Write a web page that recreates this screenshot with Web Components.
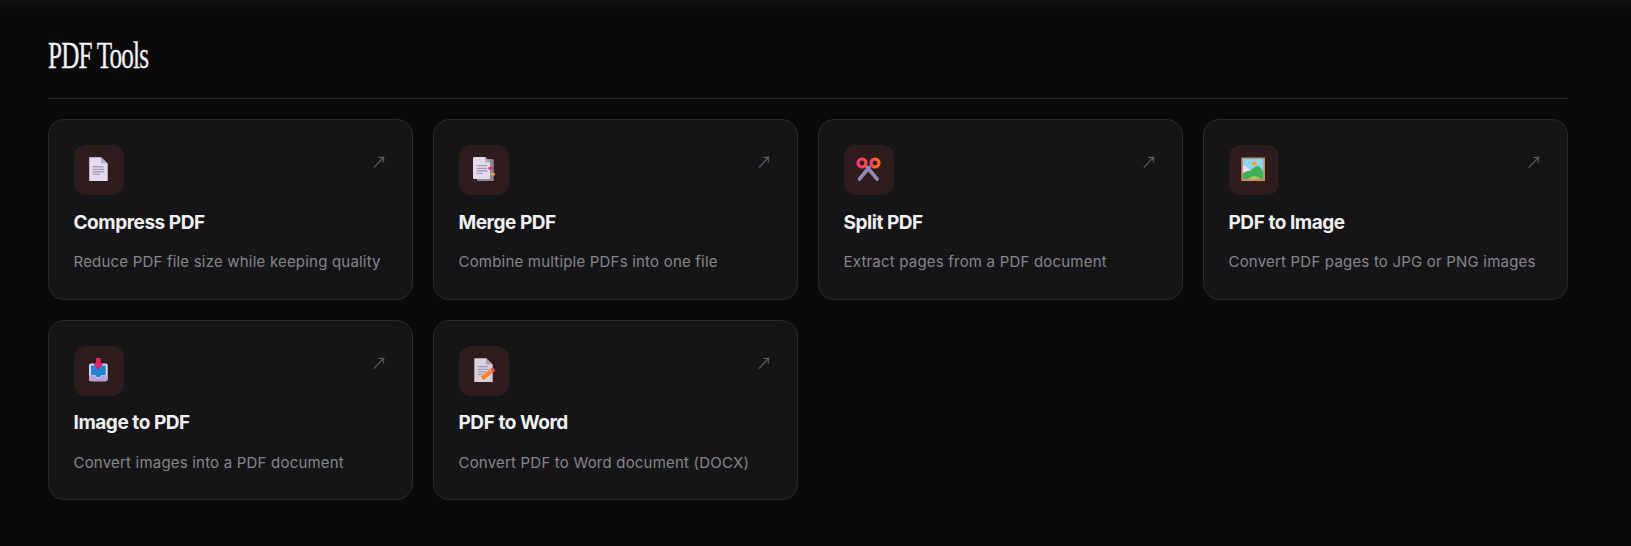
<!DOCTYPE html>
<html lang="en">
<head>
<meta charset="utf-8">
<title>PDF Tools</title>
<style>
  html, body { margin: 0; height: 100%; }
  body {
    background: linear-gradient(#101012 0, #0a0a0b 18px) #0a0a0b;
    color: #f0f0f0;
    font-family: "Inter", "Liberation Sans", sans-serif;
    overflow: hidden;
  }
</style>
</head>
<body>
<tool-section heading="PDF Tools">
  <tool-card name="Compress PDF" icon="doc">Reduce PDF file size while keeping quality</tool-card>
  <tool-card name="Merge PDF" icon="merge">Combine multiple PDFs into one file</tool-card>
  <tool-card name="Split PDF" icon="scissors">Extract pages from a PDF document</tool-card>
  <tool-card name="PDF to Image" icon="picture">Convert PDF pages to JPG or PNG images</tool-card>
  <tool-card name="Image to PDF" icon="inbox">Convert images into a PDF document</tool-card>
  <tool-card name="PDF to Word" icon="memo">Convert PDF to Word document (DOCX)</tool-card>
</tool-section>

<script>
// emoji style icons, 24x24
const ICONS = {
  doc: `
    <path d="M2.300 .3H14l6.700 6.300V24H2.300z" fill="#e6dcf0"/>
    <path d="M14 .3l6.700 6.300H14z" fill="#b9adc8"/>
    <path d="M2.300 .3h1V24h-1z" fill="#cfc4dc"/>
    <path d="M5.700 9.100h11.600v1.300H5.700zM5.700 11.700h11.600V13H5.700zM5.700 14.100h11.600v1.300H5.700zM5.700 16.500H13v1.300H5.700z" fill="#a79bb6"/>`,
  merge: `
    <path d="M5 2h15.200a1.500 1.500 0 0 1 1.500 1.500V24H5z" fill="#8f8796"/>
    <path d="M1 1.200A1.200 1.200 0 0 1 2.200 0h10.800L18 5.500V22H2.200A1.200 1.200 0 0 1 1 20.800z" fill="#e4dcec"/>
    <path d="M13 0l5 5.500h-5z" fill="#b4a9c2"/>
    <path d="M4.700 8h10.600v1.300H4.700zM4.700 10.700h10.600V12H4.700zM4.700 13.100h10.600v1.300H4.700zM4.700 15.700h6v1.300h-6z" fill="#a79bb6"/>
    <rect x="16.300" y="10" width="4.600" height="2.800" rx=".6" fill="#e8386f"/>
    <rect x="19" y="16" width="4" height="2.400" rx=".6" fill="#e8a23a"/>`,
  scissors: `
    <defs>
      <linearGradient id="ringl"><stop offset="0" stop-color="#f0347e"/><stop offset="1" stop-color="#f4503f"/></linearGradient>
      <linearGradient id="ringr"><stop offset="0" stop-color="#f0407a"/><stop offset=".5" stop-color="#f9661f"/></linearGradient>
    </defs>
    <path d="M2.500 22L12 10.500M20 22L10.500 10.500" stroke="#9488b0" stroke-width="3.600" stroke-linecap="round" fill="none"/>
    <circle cx="5" cy="6" r="4" fill="none" stroke="url(#ringl)" stroke-width="3.200"/>
    <circle cx="18" cy="6" r="4" fill="none" stroke="url(#ringr)" stroke-width="3.200"/>`,
  picture: `
    <rect x="-.7" y="0" width="23.700" height="24" fill="#cf8f5f"/>
    <rect x="-.7" y="0" width="23.700" height="1.200" fill="#7d5a44"/>
    <rect x="1" y="1.700" width="20.300" height="20.300" fill="#8fd4f2"/>
    <path d="M1 9q3 0 5 2l4 4H1z" fill="#e9e2f2"/>
    <path d="M10.300 4.500h4v4h-4z" fill="#f5a623"/>
    <path d="M1 17q4-4 7-3 5-5 8-5 3 1 5.300 6v7H1z" fill="#3fae58"/>
    <path d="M6 22q6-6 13 0z" fill="#9ad06a"/>`,
  inbox: `
    <path d="M4 5.500h14.700a2 2 0 0 1 2 2V21a2.200 2.200 0 0 1-2.200 2.200H4.200A2.200 2.200 0 0 1 2 21V7.500a2 2 0 0 1 2-2z" fill="#dcd6ec"/>
    <path d="M4 7.500h14.700V17h-4.500l-1 2h-3.700l-1-2H4z" fill="#1f86d6"/>
    <path d="M2 17.500h6l1 2.300h4.700l1-2.300h6V21a2.200 2.200 0 0 1-2.200 2.200H4.200A2.200 2.200 0 0 1 2 21z" fill="#b79fd8"/>
    <path d="M9 0h4.700v5.500h2.800L11.300 12 6.200 5.500H9z" fill="#e0245e"/>`,
  memo: `
    <path d="M2.300 .3H14l6.700 6.300V24H2.300z" fill="#d8d0dc"/>
    <path d="M14 .3l6.700 6.300H14z" fill="#aca2b8"/>
    <path d="M5.700 8h10v1.300h-10zM5.700 10.700h11.600V12H5.700zM5.700 13.200h9v1.300h-9zM5.700 15.800h5v1.300h-5z" fill="#a79bb6"/>
    <path d="M10 20.500L19 13.500" stroke="#f5862c" stroke-width="4.400" fill="none"/>
    <path d="M19.500 13L22 11" stroke="#f4504f" stroke-width="4.400" fill="none"/>
    <path d="M7.300 22.800l1.300-4 2.700 3.200z" fill="#f6d2a6"/>`
};

class ToolSection extends HTMLElement {
  constructor() {
    super();
    this.attachShadow({ mode: 'open' });
    this.shadowRoot.innerHTML = `
      <style>
        :host { display: block; padding: 34px 63px 0 48px; }
        h2 {
          margin: 0; padding-bottom: 20px;
          border-bottom: 1px solid #2a2a2d;
          font: 400 37px/44px "Liberation Serif", serif;
          letter-spacing: -1.2px; color: #f2f2f2;
          -webkit-text-stroke: .3px #f2f2f2;
        }
        h2 span { display: inline-block; transform: scaleX(.68); transform-origin: left; }
        .grid {
          display: grid;
          grid-template-columns: repeat(4, 1fr);
          gap: 20px;
          margin-top: 20px;
        }
      </style>
      <h2><span></span></h2>
      <div class="grid"><slot></slot></div>
    `;
    this.shadowRoot.querySelector('span').textContent = this.getAttribute('heading');
  }
}

class ToolCard extends HTMLElement {
  constructor() {
    super();
    this.attachShadow({ mode: 'open' });
    const icon = ICONS[this.getAttribute('icon')] || '';
    this.shadowRoot.innerHTML = `
      <style>
        :host {
          display: block; height: 180.5px; box-sizing: border-box;
          padding: 25px;
          background: #151518;
          border: 1px solid #2a2a2d;
          border-radius: 16px;
        }
        .top { display: flex; justify-content: space-between; align-items: flex-start; }
        .icon {
          width: 50px; height: 50px; border-radius: 12px;
          background: #2f1d1e;
          display: flex; align-items: center; justify-content: center;
        }
        svg { width: 24px; height: 24px; display: block; overflow: visible; margin-bottom: 2px; }
        .arrow { font: 16px/1 "Noto Sans CJK SC", sans-serif; color: #5f5f62; margin-top: 8px; }
        h3 { margin: 14.5px 0 0 -.5px; font: 700 19px/1.4 "Inter", sans-serif; color: #f0f0f0; letter-spacing: -.45px; }
        p { margin: 15px 0 0 -.5px; font: 400 15px/1.5 "Inter", sans-serif; color: #85858a; letter-spacing: .2px; }
      </style>
      <div class="top">
        <div class="icon"><svg viewBox="0 0 24 24">${icon}</svg></div>
        <span class="arrow">↗</span>
      </div>
      <h3></h3>
      <p><slot></slot></p>
    `;
    this.shadowRoot.querySelector('h3').textContent = this.getAttribute('name');
  }
}

customElements.define('tool-section', ToolSection);
customElements.define('tool-card', ToolCard);
</script>
</body>
</html>
